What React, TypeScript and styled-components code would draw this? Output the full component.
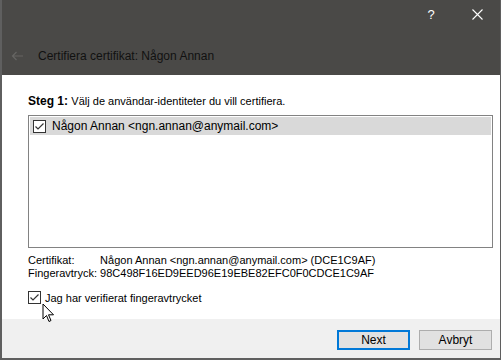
import React from 'react';
import styled, { createGlobalStyle } from 'styled-components';

const GlobalStyle = createGlobalStyle`
  html, body {
    margin: 0;
    padding: 0;
    background: #ffffff;
  }
  body {
    font-family: 'Liberation Sans', Arial, sans-serif;
    font-size: 12px;
    color: #000;
  }
`;

const Window = styled.div`
  position: relative;
  box-sizing: border-box;
  width: 501px;
  height: 360px;
  display: flex;
  flex-direction: column;
  background: #ffffff;
  border-left: 2px solid #5f5f5f;
  border-right: 1px solid #5f5f5f;
  border-bottom: 2px solid #5f5f5f;
`;

const Header = styled.div`
  height: 75px;
  background: #4a4947;
  display: flex;
  flex-direction: column;
`;

const Caption = styled.div`
  height: 28px;
  display: flex;
  justify-content: flex-end;
  align-items: center;
`;

const CaptionButton = styled.div`
  width: 46px;
  height: 28px;
  display: flex;
  align-items: center;
  justify-content: center;
  color: #ffffff;
  font-size: 13px;
`;

const TitleRow = styled.div`
  flex: 1;
  display: flex;
  align-items: center;
  padding: 8px 0 0 9px;
  gap: 15px;
`;

const Title = styled.div`
  font-size: 12px;
  color: #111;
`;

const Content = styled.div`
  flex: 1;
  display: flex;
  flex-direction: column;
  padding: 19px 7px 0 26px;
`;

const Step = styled.div`
  font-size: 12px;
  line-height: 14px;
  b {
    font-weight: bold;
  }
  span {
    font-size: 11px;
  }
`;

const List = styled.div`
  margin-top: 7px;
  height: 133px;
  border: 1px solid #828282;
  padding: 1px;
  box-sizing: border-box;
`;

const ListRow = styled.div<{ $selected?: boolean }>`
  height: 18px;
  display: flex;
  align-items: center;
  gap: 6px;
  padding-left: 3px;
  background: ${(p) => (p.$selected ? '#d9d9d9' : 'transparent')};
`;

const Box = styled.div`
  width: 11px;
  height: 11px;
  border: 1px solid #333;
  background: #fff;
  display: flex;
  align-items: center;
  justify-content: center;
  flex-shrink: 0;
`;

const Info = styled.div`
  margin-top: 6px;
  display: grid;
  grid-template-columns: max-content 1fr;
  column-gap: 3px;
  line-height: 13px;
  font-size: 11px;
`;

const Verify = styled.label`
  margin-top: 11px;
  display: flex;
  align-items: center;
  gap: 4px;
  font-size: 11px;
`;

const Footer = styled.div`
  height: 39px;
  background: #f0f0f0;
  display: flex;
  justify-content: flex-end;
  align-items: flex-start;
  padding: 11px 8px 0 0;
  box-sizing: border-box;
  gap: 9px;
`;

const Button = styled.button<{ $primary?: boolean }>`
  width: 73px;
  height: 20px;
  box-sizing: border-box;
  font-family: inherit;
  font-size: 12px;
  color: #000;
  background: #e1e1e1;
  border: ${(p) => (p.$primary ? '2px solid #0078d7' : '1px solid #adadad')};
  padding: 0;
`;

const Cursor = styled.svg`
  position: absolute;
  left: 40px;
  top: 303px;
`;

const Check = () => (
  <svg width="11" height="11" viewBox="0 0 11 11">
    <path d="M1.5 5.5 L4 8 L9.5 2.5" fill="none" stroke="#333" strokeWidth="1.2" />
  </svg>
);

export default function App() {
  return (
    <>
      <GlobalStyle />
      <Window>
        <Header>
          <Caption>
            <CaptionButton>?</CaptionButton>
            <CaptionButton>
              <svg width="11" height="11" viewBox="0 0 11 11">
                <path d="M0.5 0.5 L10.5 10.5 M10.5 0.5 L0.5 10.5" stroke="#fff" strokeWidth="1.1" />
              </svg>
            </CaptionButton>
          </Caption>
          <TitleRow>
            <svg width="12" height="10" viewBox="0 0 12 10">
              <path d="M12 5 H1.5 M5.5 1 L1.5 5 L5.5 9" fill="none" stroke="#666563" strokeWidth="1.2" />
            </svg>
            <Title>Certifiera certifikat: Någon Annan</Title>
          </TitleRow>
        </Header>
        <Content>
          <Step>
            <b>Steg 1:</b> <span>Välj de användar-identiteter du vill certifiera.</span>
          </Step>
          <List>
            <ListRow $selected>
              <Box>
                <Check />
              </Box>
              Någon Annan &lt;ngn.annan@anymail.com&gt;
            </ListRow>
          </List>
          <Info>
            <span>Certifikat:</span>
            <span>Någon Annan &lt;ngn.annan@anymail.com&gt; (DCE1C9AF)</span>
            <span>Fingeravtryck:</span>
            <span>98C498F16ED9EED96E19EBE82EFC0F0CDCE1C9AF</span>
          </Info>
          <Verify>
            <Box>
              <Check />
            </Box>
            Jag har verifierat fingeravtrycket
          </Verify>
        </Content>
        <Footer>
          <Button $primary>Next</Button>
          <Button>Avbryt</Button>
        </Footer>
        <Cursor width="13" height="21" viewBox="0 0 13 21">
          <path d="M1 1 L1 16 L4.5 12.5 L7 18.5 L9 17.5 L6.5 11.8 L11.5 11.8 Z" fill="#fff" stroke="#000" strokeWidth="1" strokeLinejoin="round" />
        </Cursor>
      </Window>
    </>
  );
}
